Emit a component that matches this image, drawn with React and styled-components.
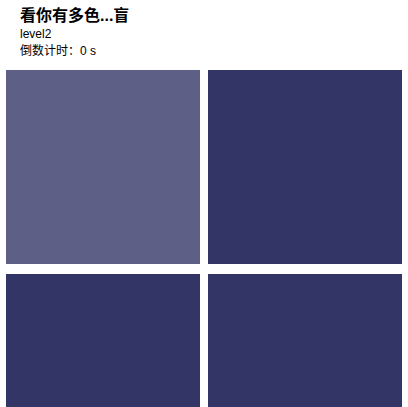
import { createGlobalStyle, styled } from 'styled-components';

const GlobalStyle = createGlobalStyle`
  html,
  body {
    margin: 0;
    padding: 0;
    background: #fff;
  }
  body {
    font-family: 'Liberation Sans', Arial, 'Noto Sans CJK SC', sans-serif;
    color: #000;
  }
`;

const StyleHeader = styled.header`
  padding: 5px 0 0 20px;
  h1 {
    margin: 0;
    font-size: 16px;
    line-height: 21px;
    font-weight: bold;
  }
  p {
    margin: 0;
    font-size: 12px;
    line-height: 17px;
  }
`;

const Board = styled.div`
  display: grid;
  grid-template-columns: repeat(${(props) => props.$size}, 194px);
  column-gap: 8px;
  row-gap: 10px;
  margin-top: 10px;
  padding-left: 6px;
`;

const Block = styled.div`
  height: 194px;
  background: ${(props) => (props.$odd ? '#5d5f86' : '#333566')};
  cursor: pointer;
`;

const level = 2;
const oddIndex = 0;

export default function App() {
  const blocks = Array.from({ length: level * level }, (_, i) => i);

  return (
    <>
      <GlobalStyle />
      <StyleHeader>
        <h1>看你有多色...盲</h1>
        <p>level{level}</p>
        <p>倒数计时：0 s</p>
      </StyleHeader>
      <Board $size={level}>
        {blocks.map((i) => (
          <Block key={i} $odd={i === oddIndex} />
        ))}
      </Board>
    </>
  );
}
